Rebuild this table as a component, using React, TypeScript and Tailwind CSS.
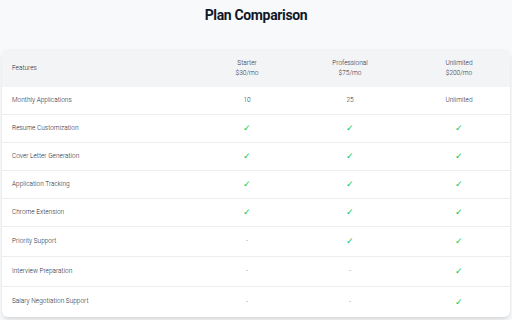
import React from "react"

type Cell = string | boolean

interface Feature {
  name: string
  values: [Cell, Cell, Cell]
  tall?: boolean
}

const plans = [
  { name: "Starter", price: "$30/mo" },
  { name: "Professional", price: "$75/mo" },
  { name: "Unlimited", price: "$200/mo" },
]

const features: Feature[] = [
  { name: "Monthly Applications", values: ["10", "25", "Unlimited"] },
  { name: "Resume Customization", values: [true, true, true] },
  { name: "Cover Letter Generation", values: [true, true, true] },
  { name: "Application Tracking", values: [true, true, true] },
  { name: "Chrome Extension", values: [true, true, true] },
  { name: "Priority Support", values: [false, true, true], tall: true },
  { name: "Interview Preparation", values: [false, false, true], tall: true },
  { name: "Salary Negotiation Support", values: [false, false, true], tall: true },
]

function renderCell(value: Cell) {
  if (value === true) {
    return <span className="text-[9px] leading-none text-green-500">✓</span>
  }
  if (value === false) {
    return <span className="text-[7px] leading-none text-gray-400">-</span>
  }
  return <span className="text-[6.5px] font-light text-gray-800">{value}</span>
}

export default function App() {
  return (
    <div className="h-[320px] w-[512px] overflow-hidden bg-[#f8f9fa] px-[2px] font-['Roboto',sans-serif]">
      {/* Title */}
      <h1 className="pt-[5px] text-center text-[14px] font-bold leading-[20px] tracking-tight text-gray-900">
        Plan Comparison
      </h1>

      {/* Comparison Table */}
      <div className="mt-[24px] overflow-hidden rounded-md bg-white shadow-md">
        <div className="grid h-[38px] grid-cols-[200px_90px_116px_102px] items-center bg-gray-100 text-[6.5px] font-light leading-[10px] text-gray-800">
          <div className="pl-[10px]">Features</div>
          {plans.map((plan) => (
            <div key={plan.name} className="text-center">
              <div>{plan.name}</div>
              <div>{plan.price}</div>
            </div>
          ))}
        </div>

        {features.map((feature, i) => (
          <div
            key={feature.name}
            className={`grid grid-cols-[200px_90px_116px_102px] items-center ${
              feature.tall ? "h-[30px]" : "h-[28px]"
            } ${i < features.length - 1 ? "border-b border-[#eeeeee]" : ""}`}
          >
            <div className="pl-[10px] text-[6.5px] font-light text-gray-800">{feature.name}</div>
            {feature.values.map((value, j) => (
              <div key={j} className="flex justify-center">
                {renderCell(value)}
              </div>
            ))}
          </div>
        ))}
      </div>
    </div>
  )
}
